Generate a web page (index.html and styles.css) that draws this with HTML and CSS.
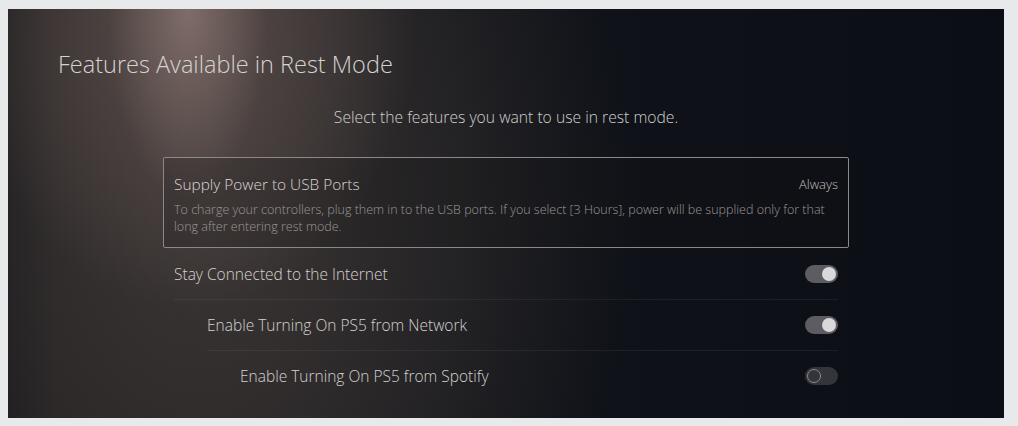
FILE: index.html
```html
<!DOCTYPE html>
<html>
<head>
<meta charset="utf-8">
<link rel="stylesheet" href="styles.css">
</head>
<body>
<div class="screen">
  <h1 class="title">Features Available in Rest Mode</h1>
  <p class="subtitle">Select the features you want to use in rest mode.</p>
  <div class="list">
    <div class="card">
      <div class="card-head">
        <span class="card-title">Supply Power to USB Ports</span>
        <span class="card-value">Always</span>
      </div>
      <p class="card-desc">To charge your controllers, plug them in to the USB ports. If you select [3 Hours], power will be supplied only for that long after entering rest mode.</p>
    </div>
    <div class="row lvl1">
      <span class="row-label">Stay Connected to the Internet</span>
      <span class="toggle on"><span class="knob"></span></span>
    </div>
    <div class="row lvl2">
      <span class="row-label">Enable Turning On PS5 from Network</span>
      <span class="toggle on"><span class="knob"></span></span>
    </div>
    <div class="row lvl3 last">
      <span class="row-label">Enable Turning On PS5 from Spotify</span>
      <span class="toggle off"><span class="knob"></span></span>
    </div>
  </div>
</div>
</body>
</html>
```
FILE: styles.css
```css
html, body {
  margin: 0;
  padding: 0;
}
body {
  background: #e8e9eb;
  font-family: "Open Sans", "Noto Sans", sans-serif;
  font-weight: 300;
}
.screen {
  box-sizing: border-box;
  margin: 9px 14px 8px 8px;
  width: 996px;
  height: 409px;
  padding-top: 40px;
  overflow: hidden;
  background:
    radial-gradient(ellipse 80px 190px at 180px 0px, rgba(170,145,138,0.45), rgba(170,145,138,0) 100%),
    radial-gradient(ellipse 230px 300px at 180px 0px, rgba(125,105,100,0.55), rgba(125,105,100,0) 100%),
    radial-gradient(ellipse 430px 600px at 200px 200px, rgba(80,72,70,0.6), rgba(80,72,70,0) 100%),
    linear-gradient(90deg, #121316 0px, #1d1b1c 50px, #1b1a1c 300px, #0f1218 580px, #0b0e14 996px);
}
.title {
  margin: 0 0 28px 50px;
  font-size: 23.5px;
  line-height: 30px;
  font-weight: 300;
  color: #d6d2d0;
}
.subtitle {
  margin: 0;
  text-align: center;
  font-size: 15.7px;
  line-height: 20px;
  color: #d0cecd;
  font-weight: 300;
}
.list {
  width: 686px;
  margin: 30px auto 0;
}
.card {
  box-sizing: border-box;
  height: 91px;
  margin-bottom: 1px;
  border: 1px solid #8d8887;
  border-radius: 2px;
  padding: 16px 10px 0 10px;
  background: rgba(20,18,20,0.2);
}
.card-head {
  display: flex;
  justify-content: space-between;
  align-items: center;
  height: 20px;
}
.card-title {
  font-size: 15.4px;
  color: #d8d5d4;
}
.card-value {
  font-size: 13px;
  color: #c2bfbe;
}
.card-desc {
  margin: 7px 0 0;
  font-size: 12.5px;
  line-height: 17px;
  color: #9b9796;
}
.row {
  display: flex;
  align-items: center;
  justify-content: space-between;
  height: 50px;
  margin-right: 11px;
  border-bottom: 1px solid rgba(255,255,255,0.06);
}
.row.last {
  border-bottom: none;
}
.lvl1 { margin-left: 11px; }
.lvl2 { margin-left: 44px; }
.lvl3 { margin-left: 77px; }
.row-label {
  font-size: 15.5px;
  color: #d4d1d0;
}
.toggle {
  position: relative;
  display: block;
  width: 33px;
  height: 18px;
  border-radius: 9px;
}
.toggle.on {
  background: #5c5c62;
}
.toggle.off {
  background: #34353a;
}
.knob {
  position: absolute;
  top: 2px;
  width: 14px;
  height: 14px;
  border-radius: 50%;
  box-sizing: border-box;
}
.toggle.on .knob {
  right: 2px;
  background: #d9d9db;
}
.toggle.off .knob {
  left: 2px;
  border: 1px solid #8a8a8e;
  background: transparent;
}
```
